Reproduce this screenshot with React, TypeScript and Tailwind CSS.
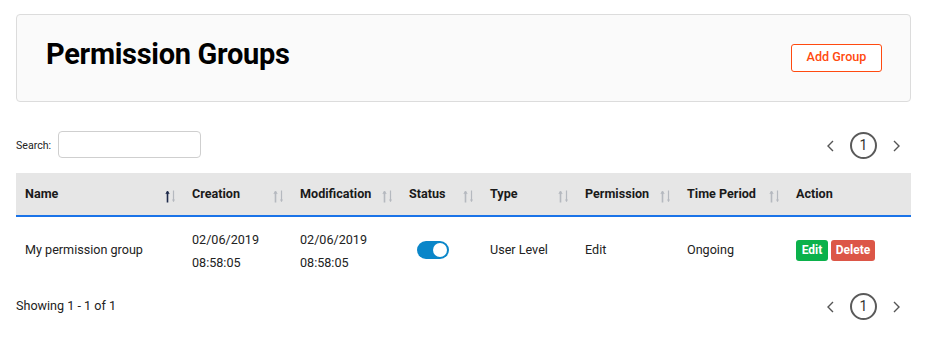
import React from "react";

const cols = [
  { label: "Name", w: 167, sort: "up" },
  { label: "Creation", w: 108, sort: "none" },
  { label: "Modification", w: 109, sort: "none" },
  { label: "Status", w: 81, sort: "none" },
  { label: "Type", w: 95, sort: "none" },
  { label: "Permission", w: 102, sort: "none" },
  { label: "Time Period", w: 109, sort: "none" },
  { label: "Action", w: 124, sort: null },
];

function SortIcon({ active }: { active: boolean }) {
  const up = active ? "#1e2a4a" : "#b5b9bf";
  const down = "#b5b9bf";
  return (
    <svg width="11" height="13" viewBox="0 0 11 13" className="shrink-0 mt-[5px]">
      <path d="M2.5 12.5V1.5" stroke={up} strokeWidth="1.6" />
      <path d="M0.8 3.6L2.5 1L4.2 3.6Z" fill={up} stroke={up} strokeWidth="0.6" />
      <path d="M8.5 0.5V11.5" stroke={down} strokeWidth="1.2" />
      <path d="M7 9.6L8.5 12L10 9.6Z" fill={down} />
    </svg>
  );
}

function Pager() {
  return (
    <div className="flex items-center gap-[15px] pr-[10px]">
      <svg width="9" height="12" viewBox="0 0 9 12">
        <path d="M7 1L2 6L7 11" fill="none" stroke="#555" strokeWidth="1.4" />
      </svg>
      <div className="w-[27px] h-[27px] rounded-full border-2 border-[#5a5a5a] flex items-center justify-center text-[14px] text-[#333]">
        1
      </div>
      <svg width="9" height="12" viewBox="0 0 9 12">
        <path d="M2 1L7 6L2 11" fill="none" stroke="#555" strokeWidth="1.4" />
      </svg>
    </div>
  );
}

export default function App() {
  return (
    <div
      className="w-[930px] h-[352px] bg-white text-[#222] pl-[16px] pr-[19px] pt-[14px]"
      style={{ fontFamily: "Roboto, 'Noto Sans', sans-serif" }}
    >
      <div className="h-[88px] bg-[#fafafa] border border-[#dcdcdc] rounded-[4px] flex items-center justify-between pl-[29px] pr-[28px]">
        <h1 className="text-[29px] font-bold text-black tracking-[-0.3px] leading-none -mt-[7px]">
          Permission Groups
        </h1>
        <button className="w-[91px] h-[28px] border border-[#ff4a10] text-[#ff4a10] rounded-[3px] text-[12.6px] font-medium bg-white mt-[-1px]">
          Add Group
        </button>
      </div>

      <div className="flex items-center justify-between mt-[27px]">
        <div className="flex items-center gap-[7px]">
          <span className="text-[10.6px] text-[#222] mt-[3px]">Search:</span>
          <input className="w-[143px] h-[27px] border border-[#cfcfcf] rounded-[4px] bg-white" />
        </div>
        <div className="mt-[3px]">
          <Pager />
        </div>
      </div>

      <div className="mt-[14px]">
        <div className="flex bg-[#e6e6e6] h-[44px] border-b-2 border-[#1a73e8]">
          {cols.map((c) => (
            <div
              key={c.label}
              style={{ width: c.w }}
              className="flex items-center justify-between pl-[9px] pr-[7px] text-[12.6px] font-bold text-[#1a1a1a]"
            >
              <span>{c.label}</span>
              {c.sort && <SortIcon active={c.sort === "up"} />}
            </div>
          ))}
        </div>
        <div className="flex h-[66px] items-center text-[12.6px] text-[#222]">
          <div style={{ width: 167 }} className="pl-[9px]">My permission group</div>
          <div style={{ width: 108 }} className="pl-[9px] leading-[23px] mt-[1px]">
            <div>02/06/2019</div>
            <div>08:58:05</div>
          </div>
          <div style={{ width: 109 }} className="pl-[9px] leading-[23px] mt-[1px]">
            <div>02/06/2019</div>
            <div>08:58:05</div>
          </div>
          <div style={{ width: 81 }} className="pl-[17px]">
            <div className="w-[32px] h-[18px] rounded-full bg-[#0a86c9] relative">
              <div className="absolute right-[2px] top-[2px] w-[14px] h-[14px] rounded-full bg-white" />
            </div>
          </div>
          <div style={{ width: 95 }} className="pl-[9px]">User Level</div>
          <div style={{ width: 102 }} className="pl-[9px]">Edit</div>
          <div style={{ width: 109 }} className="pl-[9px]">Ongoing</div>
          <div style={{ width: 124 }} className="pl-[9px] flex gap-[3px]">
            <button className="w-[32px] h-[21px] rounded-[3px] bg-[#0bb14b] text-white text-[12px] font-bold">
              Edit
            </button>
            <button className="w-[44px] h-[21px] rounded-[3px] bg-[#dc5647] text-white text-[12px] font-bold">
              Delete
            </button>
          </div>
        </div>
      </div>

      <div className="flex items-center justify-between mt-[10px]">
        <span className="text-[12.6px] text-[#222]">Showing 1 - 1 of 1</span>
        <Pager />
      </div>
    </div>
  );
}
